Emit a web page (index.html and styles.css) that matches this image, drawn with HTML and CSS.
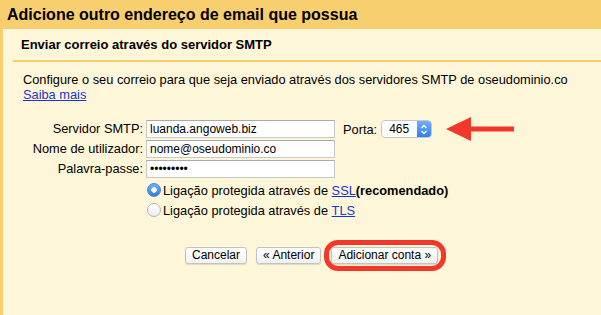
FILE: index.html
```html
<!DOCTYPE html>
<html lang="pt">
<head>
    <meta charset="UTF-8">
    <meta name="viewport" content="width=device-width, initial-scale=1.0">
    <title>Adicionar conta</title>
    <link rel="stylesheet" href="styles.css">
</head>
<body>

<h1 class="title">Adicione outro endereço de email que possua</h1>

<div class="panel">
    <div class="panel-head">Enviar correio através do servidor SMTP</div>

    <div class="panel-body">
        <p class="intro">
            Configure o seu correio para que seja enviado através dos servidores SMTP de oseudominio.co<br>
            <a href="#">Saiba mais</a>
        </p>

        <form class="smtp-form">
            <label class="field-label" for="server">Servidor SMTP:</label>
            <div class="field-line">
                <input class="field" type="text" id="server" value="luanda.angoweb.biz">
                <span class="port-label">Porta:</span>
                <div class="select">
                    <span class="select-value">465</span>
                    <span class="stepper">
                        <svg width="8" height="11" viewBox="0 0 8 11">
                            <path d="M1.5 4 L4 1.5 L6.5 4 M1.5 7 L4 9.5 L6.5 7" fill="none" stroke="#fff" stroke-width="1.3"/>
                        </svg>
                    </span>
                </div>
                <svg class="arrow" width="68" height="24" viewBox="0 0 68 24">
                    <polygon points="0,12 25,0 25,9.5 68,9.5 68,14.5 25,14.5 25,24" fill="#f2382b"/>
                </svg>
            </div>

            <label class="field-label" for="user">Nome de utilizador:</label>
            <div class="field-line">
                <input class="field" type="text" id="user" value="nome@oseudominio.co">
            </div>

            <label class="field-label" for="pass">Palavra-passe:</label>
            <div class="field-line">
                <input class="field" type="password" id="pass" value="123456789">
            </div>

            <div class="options">
                <label class="radio-row">
                    <span class="radio checked"></span>
                    Ligação protegida através de&nbsp;<a href="#">SSL</a><b>(recomendado)</b>
                </label>
                <label class="radio-row">
                    <span class="radio"></span>
                    Ligação protegida através de&nbsp;<a href="#">TLS</a>
                </label>
            </div>
        </form>

        <div class="actions">
            <button type="button" class="btn">Cancelar</button>
            <button type="button" class="btn">« Anterior</button>
            <span class="highlight">
                <button type="button" class="btn">Adicionar conta »</button>
            </span>
        </div>
    </div>
</div>

</body>
</html>
```

FILE: styles.css
```css
body {
    margin: 0;
    font-family: "Liberation Sans", Arial, sans-serif;
    background-color: #fef6d9;
    color: #000;
}

.title {
    margin: 0;
    height: 29px;
    line-height: 30px;
    padding-left: 7px;
    font-size: 16px;
    font-weight: bold;
    background-color: #f7cf6e;
}

.panel {
    border-left: 3px solid #f7cf6e;
    height: 286px;
}

.panel-head {
    margin-left: 10px;
    padding-left: 8px;
    height: 31px;
    line-height: 31px;
    font-size: 13px;
    font-weight: bold;
    border-bottom: 2px solid #f7cf6e;
}

.panel-body {
    padding: 10px 0 0 20px;
    font-size: 12.8px;
}

.intro {
    margin: 0;
    line-height: 15px;
}

a {
    color: #1a35d6;
}

.smtp-form {
    display: grid;
    grid-template-columns: 120px auto;
    column-gap: 3px;
    row-gap: 2px;
    margin-top: 18px;
    align-items: center;
}

.field-label {
    text-align: right;
    white-space: nowrap;
    line-height: 18px;
}

.field-line {
    display: flex;
    align-items: center;
    height: 18px;
}

.field {
    box-sizing: border-box;
    width: 189px;
    height: 18px;
    margin: 0;
    padding: 0 3px;
    border: 1px solid #c8c8c8;
    border-top-color: #a9a9a9;
    background: #fff;
    font-family: "Liberation Sans", Arial, sans-serif;
    font-size: 12px;
    color: #000;
}

.port-label {
    margin-left: 8px;
    margin-right: 4px;
}

.select {
    box-sizing: border-box;
    display: flex;
    width: 51px;
    height: 18px;
    border: 1px solid #c6c6c6;
    border-radius: 4px;
    background: #fff;
    overflow: hidden;
    font-size: 12px;
}

.select-value {
    flex: 1;
    padding-left: 7px;
    line-height: 16px;
}

.stepper {
    width: 14px;
    display: flex;
    align-items: center;
    justify-content: center;
    background: linear-gradient(#6fb0f8, #2f7ff0);
}

.arrow {
    margin-left: 14px;
}

.options {
    grid-column: 2;
    margin-top: 0;
}

.radio-row {
    display: flex;
    align-items: center;
    height: 20px;
    margin-left: 1px;
}

.radio {
    box-sizing: border-box;
    width: 14px;
    height: 14px;
    margin-right: 2px;
    border-radius: 50%;
    border: 1px solid #b4b4b4;
    background: linear-gradient(#fff, #ececec);
}

.radio.checked {
    border-color: #3d86e8;
    background: radial-gradient(circle, #fff 0 2.5px, transparent 3px), linear-gradient(#70b2f9, #2c7de9);
}

.actions {
    display: flex;
    align-items: center;
    margin-top: 27px;
    padding-left: 162px;
}

.btn {
    box-sizing: border-box;
    height: 17px;
    padding: 0 6px;
    margin: 0 9px 0 0;
    border: 1px solid #c2c2c2;
    border-radius: 3px;
    background: linear-gradient(#fff, #f1f1f1);
    box-shadow: 0 1px 1px rgba(0, 0, 0, 0.12);
    font-family: "Liberation Sans", Arial, sans-serif;
    font-size: 12px;
    line-height: 15px;
    color: #000;
}

.highlight {
    position: relative;
    display: inline-flex;
    margin-left: 1px;
}

.highlight .btn {
    margin: 0;
}

.highlight::after {
    content: "";
    position: absolute;
    left: -7px;
    right: -8px;
    top: -7px;
    bottom: -7px;
    border: 5px solid #f2382b;
    border-radius: 14px;
}
```
